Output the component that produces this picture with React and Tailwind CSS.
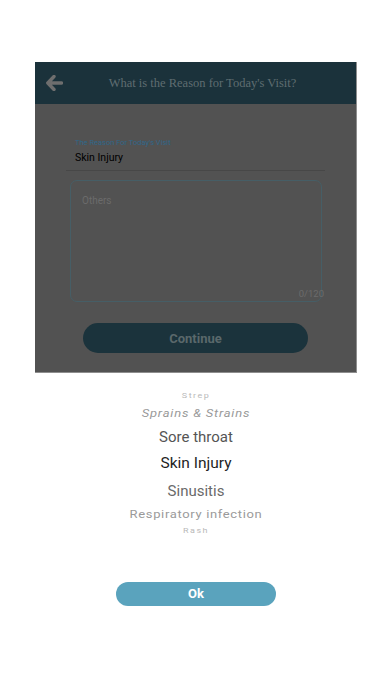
import React from 'react';

const items = [
  { label: 'Strep', cls: 'h-[13px] text-[9px] text-[#b9b9b9] tracking-[0.16em] scale-y-[0.7]' },
  { label: 'Sprains & Strains', cls: 'h-[21px] text-[13px] text-[#9a9a9a] tracking-[0.06em] scale-y-[0.85] italic' },
  { label: 'Sore throat', cls: 'h-[26px] text-[15px] text-[#555555]' },
  { label: 'Skin Injury', cls: 'h-[28px] text-[15.5px] text-[#1f1f1f]' },
  { label: 'Sinusitis', cls: 'h-[26px] text-[15px] text-[#6a6a6a]' },
  { label: 'Respiratory infection', cls: 'h-[21px] text-[13px] text-[#9a9a9a] tracking-[0.05em] scale-y-[0.85]' },
  { label: 'Rash', cls: 'h-[13px] text-[9px] text-[#b9b9b9] tracking-[0.16em] scale-y-[0.7]' },
];

const App = () => {
  return (
    <div className="w-[392px] h-[696px] bg-white flex flex-col font-['Roboto',sans-serif]">
      {/* dimmed form behind the picker */}
      <div className="mt-[62px] ml-[35px] w-[322px] h-[311px] flex flex-col bg-[#525252] border-r border-b border-[#8e8e8e]">
        <div className="h-[42px] bg-[#1b323b] flex items-center relative shrink-0">
          <svg className="absolute left-[11px] top-[13px]" width="17" height="16" viewBox="0 0 17 16">
            <path d="M8 1.5 L1.8 8 L8 14.5 M2.5 8 H15.5" stroke="#6e6e6e" strokeWidth="3.4" fill="none" strokeLinecap="round" strokeLinejoin="round" />
          </svg>
          <div className="w-full text-center pl-[14px] text-[12.5px] text-[#5f6d71] font-['Liberation_Serif',serif]">
            What is the Reason for Today's Visit?
          </div>
        </div>

        <div className="flex flex-col pt-[34px]">
          <div className="ml-[40px] text-[7.5px] leading-[9px] text-[#30678a]">The Reason For Today's Visit</div>
          <div className="ml-[40px] mt-[4px] text-[10.5px] leading-[13px] text-black">Skin Injury</div>
          <div className="ml-[31px] mr-[31px] mt-[6px] h-px bg-[#474747]"></div>

          <div className="ml-[35px] mt-[9px] w-[252px] h-[122px] rounded-[7px] border border-[#465e66] relative">
            <div className="ml-[11px] mt-[12px] text-[10px] text-[#6b6b6b]">Others</div>
            <div className="absolute right-[-3px] bottom-[0px] text-[9.5px] text-[#6b6b6b]">0/120</div>
          </div>

          <div className="ml-[48px] mt-[21px] w-[225px] h-[30px] rounded-full bg-[#1b333c] flex items-center justify-center pt-[2px] text-[13px] font-bold text-[#5a686b]">
            Continue
          </div>
        </div>
      </div>

      {/* wheel picker */}
      <div className="mt-[17px] flex flex-col items-center">
        {items.map((it) => (
          <div key={it.label} className={`flex items-center justify-center leading-none ${it.cls}`}>
            {it.label}
          </div>
        ))}
      </div>

      <div className="mt-[44px] ml-[116px] w-[160px] h-[24px] rounded-full bg-[#5aa3bd] flex items-center justify-center text-white font-bold text-[13px]">
        Ok
      </div>
    </div>
  );
};

export default App;
